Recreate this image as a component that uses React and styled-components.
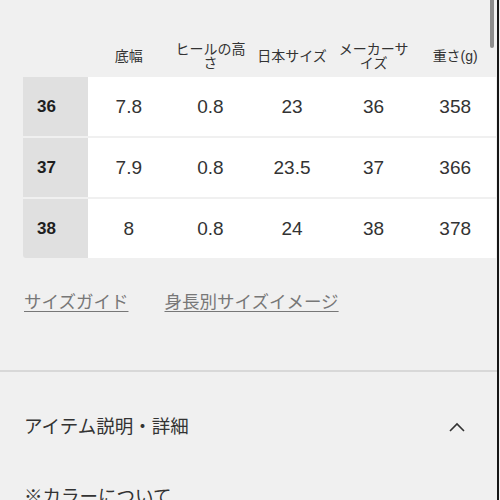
import React from "react";
import styled, { createGlobalStyle } from "styled-components";

const GlobalStyle = createGlobalStyle`
  html, body {
    margin: 0;
    padding: 0;
    background: #f0f0f0;
  }
  body {
    font-family: "Liberation Sans", "Noto Sans CJK JP", sans-serif;
    color: #333;
  }
`;

const Page = styled.div`
  position: relative;
  width: 497px;
  height: 500px;
  overflow: hidden;
  border-right: 2px solid #161616;
  background: #f0f0f0;
`;

const ScrollThumb = styled.div`
  position: absolute;
  top: 0;
  right: 3px;
  width: 4px;
  height: 48px;
  border-radius: 0 0 2px 2px;
  background: #8c8c8c;
`;

const SizeTable = styled.div`
  display: grid;
  grid-template-columns: 65px repeat(5, 1fr);
  grid-template-rows: 38px repeat(3, 59px);
  row-gap: 2px;
  margin: 0 1px 0 23px;
  padding-top: 37px;
`;

const HeadCell = styled.div`
  display: flex;
  align-items: center;
  justify-content: center;
  text-align: center;
  font-size: 14px;
  line-height: 14px;
  color: #333;
  padding: 0 5px;
`;

const LabelCell = styled.div`
  background: #e0e0e0;
  display: flex;
  align-items: center;
  padding-left: 14px;
  font-size: 17px;
  font-weight: bold;
  color: #1e1e1e;
  border-radius: ${(p) => (p.$last ? "0 0 0 3px" : "0")};
`;

const DataCell = styled.div`
  background: #fff;
  display: flex;
  align-items: center;
  justify-content: center;
  font-size: 19px;
  color: #333;
`;

const Links = styled.div`
  display: flex;
  gap: 36px;
  padding-left: 24px;
  margin-top: 32px;
`;

const GuideLink = styled.a`
  font-size: 17.5px;
  line-height: 24px;
  color: #777;
  text-decoration: underline;
  text-underline-offset: 3px;
  text-decoration-thickness: 1px;
`;

const Divider = styled.hr`
  margin: 56px 0 0;
  border: 0;
  height: 2px;
  background: #d8d8d8;
`;

const SectionHead = styled.div`
  display: flex;
  align-items: center;
  justify-content: space-between;
  padding: 0 32px 0 24px;
  margin-top: 42px;
  height: 26px;
`;

const SectionTitle = styled.h2`
  margin: 0;
  font-size: 18.5px;
  font-weight: normal;
  color: #333;
  line-height: 26px;
`;

const Body = styled.p`
  margin: 44px 0 0;
  padding-left: 24px;
  font-size: 18.5px;
  line-height: 26px;
  color: #333;
`;

const headers = ["底幅", "ヒールの高さ", "日本サイズ", "メーカーサイズ", "重さ(g)"];
const rows = [
  ["36", "7.8", "0.8", "23", "36", "358"],
  ["37", "7.9", "0.8", "23.5", "37", "366"],
  ["38", "8", "0.8", "24", "38", "378"],
];

export default function App() {
  return (
    <>
      <GlobalStyle />
      <Page>
        <ScrollThumb />
        <SizeTable>
          <HeadCell />
          {headers.map((h) => (
            <HeadCell key={h}>{h}</HeadCell>
          ))}
          {rows.map((r, i) => (
            <React.Fragment key={r[0]}>
              <LabelCell $last={i === rows.length - 1}>{r[0]}</LabelCell>
              {r.slice(1).map((v, j) => (
                <DataCell key={j}>{v}</DataCell>
              ))}
            </React.Fragment>
          ))}
        </SizeTable>
        <Links>
          <GuideLink>サイズガイド</GuideLink>
          <GuideLink>身長別サイズイメージ</GuideLink>
        </Links>
        <Divider />
        <SectionHead>
          <SectionTitle>アイテム説明・詳細</SectionTitle>
          <svg width="16" height="10" viewBox="0 0 16 10" fill="none">
            <path d="M1 9 L8 2 L15 9" stroke="#333" strokeWidth="1.6" />
          </svg>
        </SectionHead>
        <Body>※カラーについて</Body>
      </Page>
    </>
  );
}
